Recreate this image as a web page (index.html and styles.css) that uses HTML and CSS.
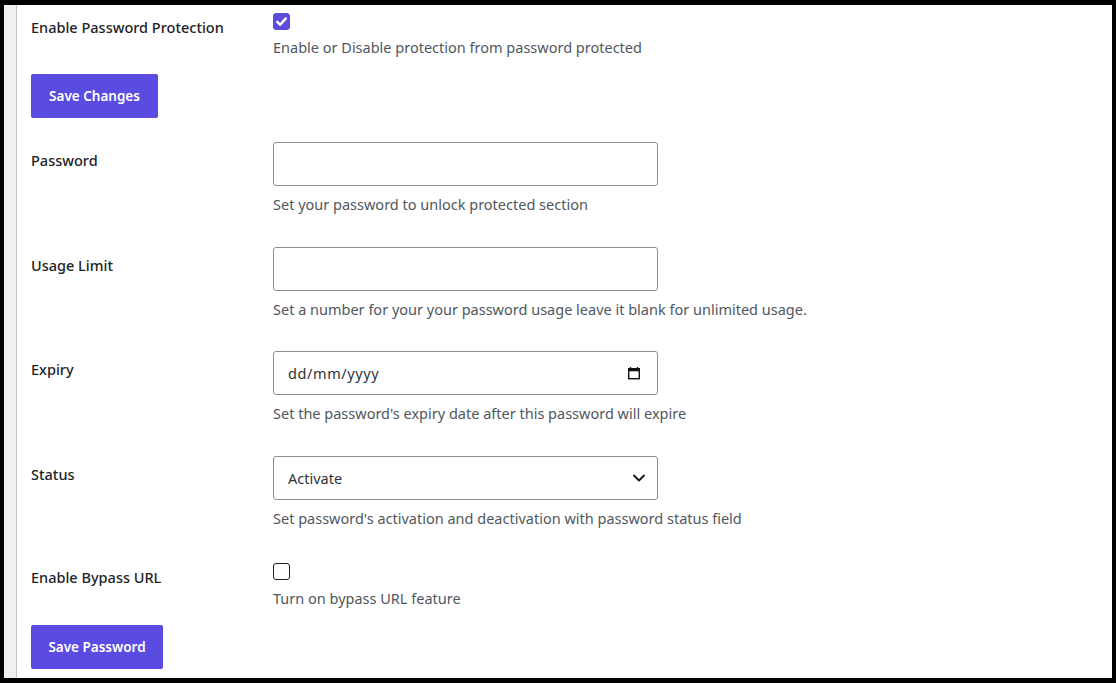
FILE: index.html
```html
<!DOCTYPE html>
<html lang="en">
<head>
<meta charset="utf-8">
<title>Password Protection Settings</title>
<link rel="stylesheet" href="styles.css">
</head>
<body>
<div class="frame">
  <div class="strip"></div>
  <main class="content">
    <div class="row row-first">
      <div class="label label-check">Enable Password Protection</div>
      <div class="field">
        <span class="checkbox checked">
          <svg viewBox="0 0 17 17" width="17" height="17"><path d="M4.2 8.8 L7.2 11.8 L12.8 5.4" fill="none" stroke="#fff" stroke-width="2.4" stroke-linecap="round" stroke-linejoin="round"/></svg>
        </span>
        <p class="desc desc-check">Enable or Disable protection from password protected</p>
      </div>
    </div>
    <button class="btn btn-changes" type="button">Save Changes</button>

    <div class="row">
      <div class="label">Password</div>
      <div class="field">
        <div class="input"></div>
        <p class="desc">Set your password to unlock protected section</p>
      </div>
    </div>

    <div class="row">
      <div class="label">Usage Limit</div>
      <div class="field">
        <div class="input"></div>
        <p class="desc">Set a number for your your password usage leave it blank for unlimited usage.</p>
      </div>
    </div>

    <div class="row row-tight">
      <div class="label">Expiry</div>
      <div class="field">
        <div class="input input-date">
          <span class="value">dd/mm/yyyy</span>
          <svg class="cal" viewBox="0 0 14 14" width="14" height="14"><path d="M3.5 1 V3 M10.5 1 V3" stroke="#111" stroke-width="1.4"/><rect x="1.7" y="2.7" width="10.6" height="10" fill="none" stroke="#111" stroke-width="1.4"/><rect x="1.7" y="2.7" width="10.6" height="2.6" fill="#111"/></svg>
        </div>
        <p class="desc">Set the password's expiry date after this password will expire</p>
      </div>
    </div>

    <div class="row">
      <div class="label">Status</div>
      <div class="field">
        <div class="input input-select">
          <span class="value">Activate</span>
          <svg class="chev" viewBox="0 0 14 10" width="14" height="10"><path d="M2 2.5 L7 7.5 L12 2.5" fill="none" stroke="#111" stroke-width="1.8" stroke-linecap="round" stroke-linejoin="round"/></svg>
        </div>
        <p class="desc">Set password's activation and deactivation with password status field</p>
      </div>
    </div>

    <div class="row row-bypass">
      <div class="label label-check">Enable Bypass URL</div>
      <div class="field">
        <span class="checkbox"></span>
        <p class="desc desc-bypass">Turn on bypass URL feature</p>
      </div>
    </div>
    <button class="btn btn-password" type="button">Save Password</button>
  </main>
</div>
</body>
</html>
```
FILE: styles.css
```css
* { box-sizing: border-box; }
html, body { margin: 0; padding: 0; background: #fff; }
body {
  font-family: "Noto Sans", "Open Sans", "Liberation Sans", sans-serif;
  color: #1d2327;
}
.frame {
  width: 1116px;
  height: 683px;
  border-style: solid;
  border-color: #000;
  border-width: 5px 4px 5px 4px;
  display: flex;
  overflow: hidden;
}
.strip {
  width: 13px;
  flex: none;
  background: #f0f0f1;
  border-right: 1px solid #c3c4c7;
}
.content {
  flex: 1;
  padding-left: 14px;
}
.row {
  display: grid;
  grid-template-columns: 242px 385px;
  padding: 17px 0 16px;
}
.row-first { padding: 8px 0 17px; }
.row-tight { padding-top: 16px; }
.row-bypass { padding: 19px 0 17px; }
.label {
  font-size: 14.5px;
  font-weight: 500;
  line-height: 20px;
  margin-top: 8px;
}
.label-check { margin-top: 4px; }
.field { display: flex; flex-direction: column; }
.input {
  height: 44px;
  border: 1px solid #8c8f94;
  border-radius: 3px;
  background: #fff;
  display: flex;
  align-items: center;
  justify-content: space-between;
  padding: 0 16px 0 14px;
  font-size: 14.5px;
  color: #2c3338;
}
.input-select { padding-right: 11px; }
.input-date .value { letter-spacing: 0.6px; }
.desc {
  margin: 8px 0 0;
  font-size: 14.5px;
  line-height: 20px;
  color: #50575e;
  white-space: nowrap;
}
.desc-check { margin-top: 7px; }
.desc-bypass { margin-top: 8px; }
.checkbox {
  width: 17px;
  height: 17px;
  border: 1px solid #1e1e1e;
  border-radius: 3px;
  display: block;
  background: #fff;
}
.checkbox.checked {
  background: #5b4cdb;
  border-color: #5b4cdb;
}
.checkbox svg { display: block; margin: -1px; }
.btn {
  display: block;
  height: 44px;
  border: none;
  border-radius: 2px;
  background: #5a4be1;
  color: #fff;
  font-family: inherit;
  font-size: 13.5px;
  font-weight: 600;
  padding: 0;
  cursor: pointer;
}
.btn-changes { width: 127px; margin-bottom: 7px; }
.btn-password { width: 132px; }
```
